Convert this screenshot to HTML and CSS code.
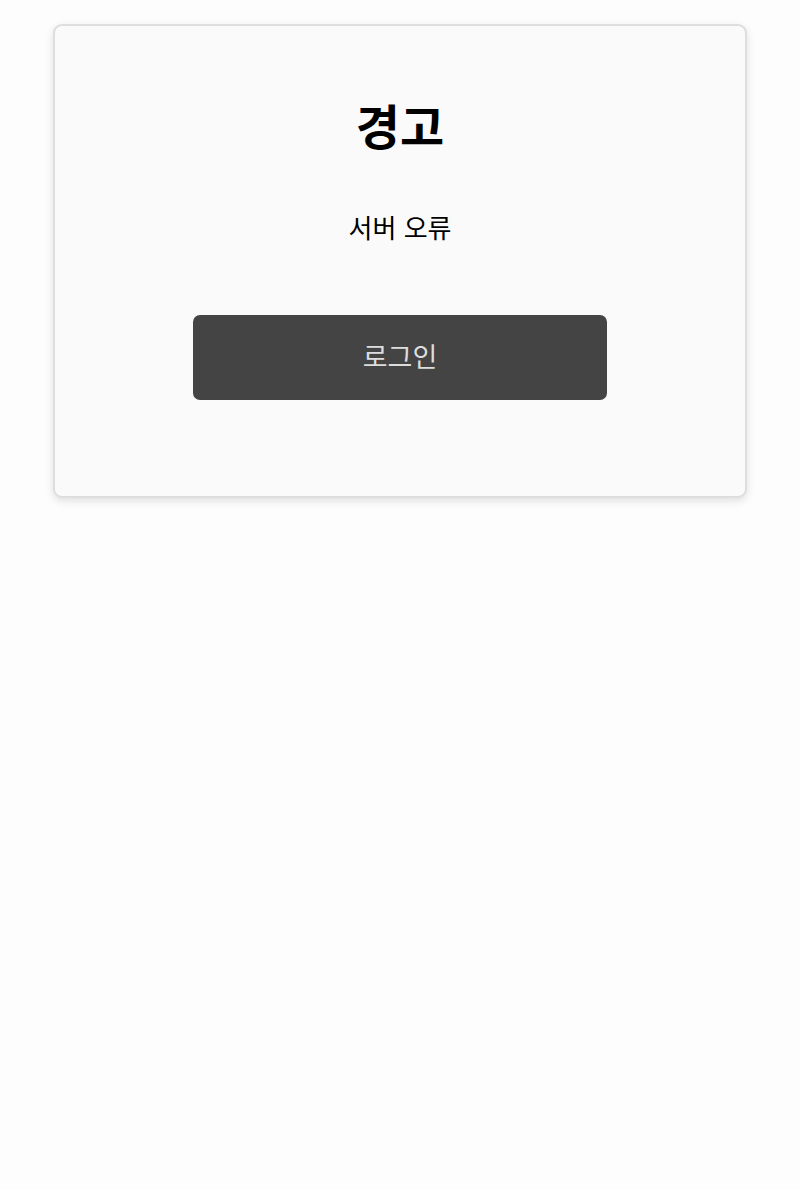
FILE: index.html
```html
<!DOCTYPE html>
<html lang="ko">
<head>
<meta charset="utf-8">
<title>경고</title>
<meta name="viewport" content="width=device-width, initial-scale=1.0">
<link rel="stylesheet" href="styles.css">
</head>
<body>
<div class="dialog">
<h1 class="dialog-title">경고</h1>
<p class="dialog-message">서버 오류</p>
<button class="dialog-button">로그인</button>
</div>
</body>
</html>
```

FILE: styles.css
```css
* {
margin: 0;
padding: 0;
box-sizing: border-box;
}

body {
background-color: #fdfdfd;
color: #000;
font-family: "Noto Sans CJK KR", "Noto Sans", sans-serif;
padding: 24px 53px;
}

.dialog {
background-color: #fafafa;
border: 2px solid #dedede;
border-radius: 9px;
box-shadow: 0 3px 8px rgba(0, 0, 0, 0.12);
display: flex;
flex-direction: column;
align-items: center;
padding: 70px 0 96px;
}

.dialog-title {
font-size: 48px;
font-weight: bold;
line-height: 56px;
}

.dialog-message {
font-size: 26px;
line-height: 34px;
margin-top: 58px;
}

.dialog-button {
width: 414px;
height: 85px;
margin-top: 71px;
padding-bottom: 4px;
border: none;
border-radius: 7px;
background-color: #444;
color: #ddd;
font-family: "Noto Sans CJK KR", "Noto Sans", sans-serif;
font-size: 27px;
cursor: pointer;
}
```
